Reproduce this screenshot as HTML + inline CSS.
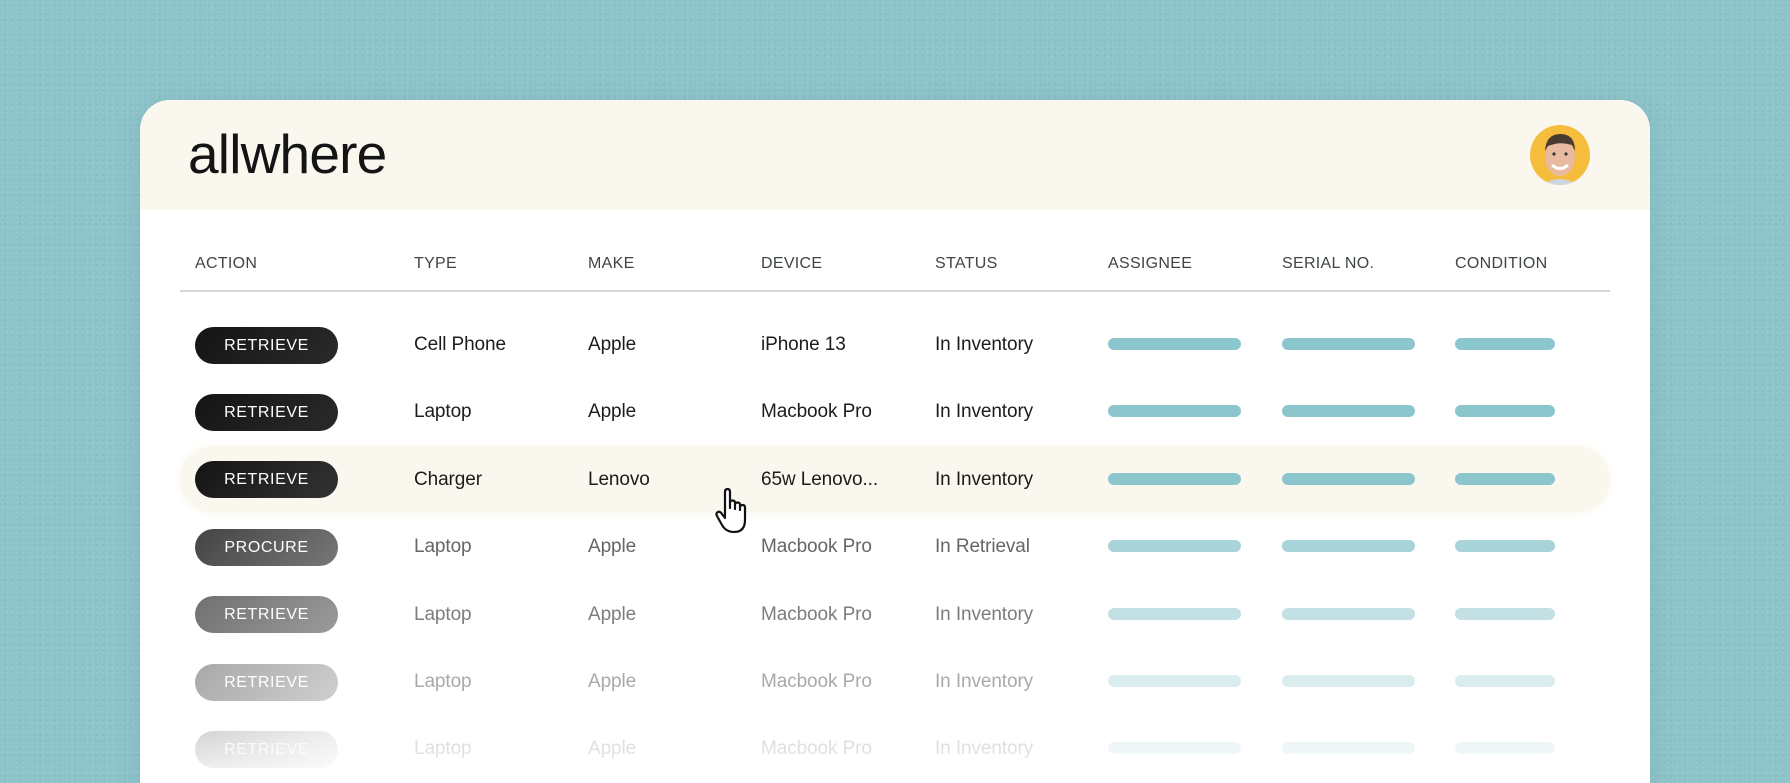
<!DOCTYPE html>
<html><head><meta charset="utf-8">
<style>
*{margin:0;padding:0;box-sizing:border-box}
html,body{width:1790px;height:783px;overflow:hidden}
body{background:#8dc4cb;position:relative;font-family:"Liberation Sans",sans-serif;
background-image:radial-gradient(rgba(255,255,255,.10) 1px,transparent 1.2px),radial-gradient(rgba(0,60,70,.07) 1px,transparent 1.2px);
background-size:5px 5px,7px 7px;background-position:0 0,2px 3px}
.card{position:absolute;left:140px;top:100px;width:1510px;height:720px;background:#fff;border-radius:30px 30px 0 0;overflow:hidden;box-shadow:0 4px 30px rgba(0,0,0,.08)}
.head{position:absolute;left:0;top:0;width:100%;height:110px;background:#faf7ef}
.logo{position:absolute;left:48px;top:22px;font-size:55px;line-height:normal;color:#141414;letter-spacing:-0.8px;font-family:"Liberation Sans",sans-serif}
.av{position:absolute;left:1390px;top:25px;width:60px;height:60px;border-radius:50%;background:#f6bd3c;overflow:hidden}
.th{position:absolute;top:155px;font-size:16px;color:#3e4447;letter-spacing:.3px}
.line{position:absolute;left:40px;top:190px;width:1430px;height:2px;background:#d8d8d8}
.hl{position:absolute;left:40px;top:346px;width:1430px;height:67px;background:#faf7ee;border-radius:34px;box-shadow:0 0 10px #faf7ee}
.pill{position:absolute;left:55px;width:143px;height:37px;border-radius:19px;color:#fff;font-size:16px;letter-spacing:.6px;text-align:center;line-height:37px;font-weight:500}
.td{position:absolute;font-size:19px;letter-spacing:-.1px}
.bar{position:absolute;height:12px;border-radius:6px}
</style></head><body>
<div class="card">
<div class="head"><div class="logo">allwhere</div>
<div class="av"><svg width="60" height="60" viewBox="0 0 60 60">
<ellipse cx="30" cy="32" rx="15" ry="19" fill="#e9b9a0"/>
<path d="M15 26 Q16 8 32 9 Q45 10 45 26 L42 20 Q30 16 18 21 Z" fill="#4a3b32"/>
<path d="M22 40 Q30 47 38 40" stroke="#fff" stroke-width="3" fill="none"/>
<circle cx="24" cy="29" r="1.6" fill="#333"/><circle cx="36" cy="29" r="1.6" fill="#333"/>
<path d="M12 60 Q30 48 48 60Z" fill="#cfd6e0"/></svg></div></div>
<div class="th" style="left:55px">ACTION</div>
<div class="th" style="left:274px">TYPE</div>
<div class="th" style="left:448px">MAKE</div>
<div class="th" style="left:621px">DEVICE</div>
<div class="th" style="left:795px">STATUS</div>
<div class="th" style="left:968px">ASSIGNEE</div>
<div class="th" style="left:1142px">SERIAL NO.</div>
<div class="th" style="left:1315px">CONDITION</div>
<div class="line"></div>
<div class="hl"></div>
</div>
<div id="rows"></div>
<script>
var rows=[["RETRIEVE","Cell Phone","Apple","iPhone 13","In Inventory"],["RETRIEVE","Laptop","Apple","Macbook Pro","In Inventory"],["RETRIEVE","Charger","Lenovo","65w Lenovo...","In Inventory"],["PROCURE","Laptop","Apple","Macbook Pro","In Retrieval"],["RETRIEVE","Laptop","Apple","Macbook Pro","In Inventory"],["RETRIEVE","Laptop","Apple","Macbook Pro","In Inventory"],["RETRIEVE","Laptop","Apple","Macbook Pro","In Inventory"]];
var pill=[["#141414","#2a2a2a"],["#141414","#2a2a2a"],["#141414","#333"],["#444","#777"],["#707070","#9a9a9a"],["#a8a8a8","#cfcfcf"],["#d0d0d0","#f4f4f4"]];
var tc=["#1c1c1c","#1c1c1c","#1c1c1c","#666","#7d7d7d","#a9a9a9","#d4d4d4"];
var bc=["#8cc6cd","#8cc6cd","#8cc6cd","#a8d3d8","#c3e1e4","#d9ecee","#eaf4f5"];
var h="";
for(var i=0;i<7;i++){var cy=345+i*67.4;
h+='<div class="pill" style="left:195px;top:'+(cy-18.5)+'px;background:linear-gradient(135deg,'+pill[i][0]+','+pill[i][1]+')'+(i==6?';color:#fafafa':'')+'">'+rows[i][0]+'</div>';
var xs=[414,588,761,935];
for(var j=0;j<4;j++)h+='<div class="td" style="left:'+xs[j]+'px;top:'+(cy-11)+'px;color:'+tc[i]+'">'+rows[i][j+1]+'</div>';
h+='<div class="bar" style="left:1108px;width:133px;top:'+(cy-7)+'px;background:'+bc[i]+'"></div>';
h+='<div class="bar" style="left:1282px;width:133px;top:'+(cy-7)+'px;background:'+bc[i]+'"></div>';
h+='<div class="bar" style="left:1455px;width:100px;top:'+(cy-7)+'px;background:'+bc[i]+'"></div>';}
h+='<div style="position:absolute;left:140px;top:725px;width:1510px;height:58px;background:linear-gradient(rgba(255,255,255,0),rgba(255,255,255,.7))"></div>';
h+='<svg style="position:absolute;left:714px;top:488px" width="38" height="48" viewBox="0 0 38 48"><path d="M11 4 Q11 1 13.5 1 Q16 1 16 4 L16 20 L16 15 Q16 12.5 18.5 12.5 Q21 12.5 21 15 L21 21 L21 17 Q21 14.5 23.5 14.5 Q26 14.5 26 17 L26 22 L26 19.5 Q26 17 28.5 17 Q31 17 31 19.5 L31 32 Q31 44 20 44 Q12 44 8 37 L3 28 Q1.5 25 4 24 Q6 23 8 26 L11 30 Z" fill="#fff" stroke="#111" stroke-width="2.2" stroke-linejoin="round"/></svg>';
document.getElementById("rows").innerHTML=h;
</script>
</body></html>
